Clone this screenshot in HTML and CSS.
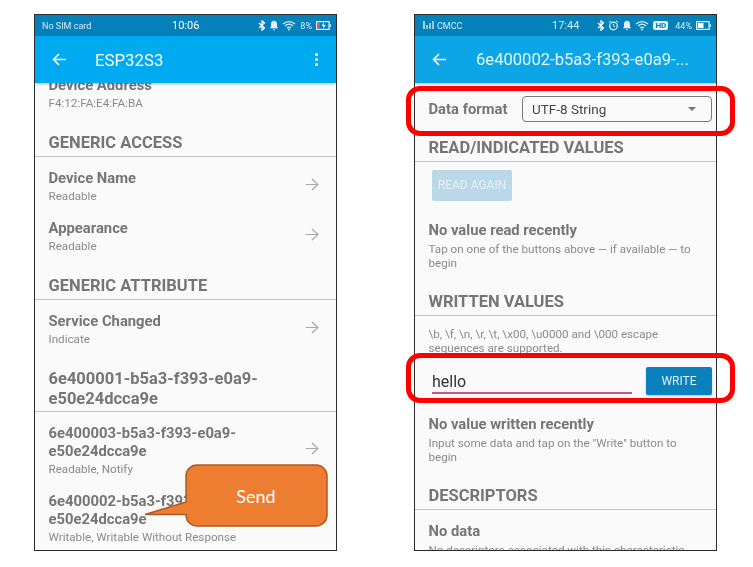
FILE: index.html
```html
<!DOCTYPE html>
<html>
<head>
<meta charset="UTF-8">
<title>ESP32S3</title>
<link rel="stylesheet" href="styles.css">
</head>
<body>
<div class="page">

	<!-- left phone: services list -->
	<div class="phone">
		<div class="status">
			<span class="carrier">No SIM card</span>
			<span class="clock clock-left">10:06</span>
			<span class="status-icons">
				<svg width="8" height="11" viewBox="0 0 8 11"><path d="M1 3l5.500 5-2.500 2.300V.7L6.500 3 1 8" fill="none" stroke="#fff" stroke-width="1.200"/></svg>
				<svg width="10" height="11" viewBox="0 0 10 11"><path d="M5 .8c-2 0-3 1.500-3 3.500v2.500L1 8.200h8L8 6.800V4.300C8 2.300 7 .8 5 .8zM3.900 9h2.200L5 10.400z" fill="#e8f4fa"/></svg>
				<svg width="15" height="11" viewBox="0 0 15 11"><path d="M1 4c3.500-3.300 8.500-3.300 12 0M3 6c2.400-2.200 5.600-2.200 8 0M5 8c1.200-1 2.800-1 4 0" fill="none" stroke="#dcedf6" stroke-width="1.200"/><circle cx="7" cy="9.600" r="1" fill="#dcedf6"/></svg>
				<span class="pct">8%</span>
				<svg width="15" height="9" viewBox="0 0 15 9"><rect x=".6" y=".6" width="12.500" height="7.800" fill="none" stroke="#e8f4fa" stroke-width="1.200"/><rect x="13.500" y="3" width="1.300" height="3" fill="#e8f4fa"/><rect x="2" y="2" width="2" height="5" fill="#e8506a"/><path d="M8 1.500L5.500 5h2L7 7.800 10 4H8z" fill="#fff"/></svg>
			</span>
		</div>
		<div class="appbar">
			<svg class="back" width="15" height="13" viewBox="0 0 15 13"><path d="M14 6.500H1.500M7 1L1.500 6.500 7 12" fill="none" stroke="#fff" stroke-width="1.600"/></svg>
			<span class="appbar-title">ESP32S3</span>
			<span class="dots"><i></i><i></i><i></i></span>
		</div>
		<div class="scroll">
			<div class="address">
				<div class="item-title">Device Address</div>
				<div class="item-sub">F4:12:FA:E4:FA:BA</div>
			</div>

			<h2 class="heading">GENERIC ACCESS</h2>
			<div class="item">
				<div><div class="item-title">Device Name</div><div class="item-sub">Readable</div></div>
				<svg class="go" width="14" height="13" viewBox="0 0 14 13"><path d="M.5 6.500h12.500M7 1l6 5.500L7 12" fill="none" stroke="#a9a9a9" stroke-width="1.200"/></svg>
			</div>
			<div class="item">
				<div><div class="item-title">Appearance</div><div class="item-sub">Readable</div></div>
				<svg class="go" width="14" height="13" viewBox="0 0 14 13"><path d="M.5 6.500h12.500M7 1l6 5.500L7 12" fill="none" stroke="#a9a9a9" stroke-width="1.200"/></svg>
			</div>

			<h2 class="heading heading-next">GENERIC ATTRIBUTE</h2>
			<div class="item">
				<div><div class="item-title">Service Changed</div><div class="item-sub">Indicate</div></div>
				<svg class="go" width="14" height="13" viewBox="0 0 14 13"><path d="M.5 6.500h12.500M7 1l6 5.500L7 12" fill="none" stroke="#a9a9a9" stroke-width="1.200"/></svg>
			</div>

			<h2 class="heading heading-uuid">6e400001-b5a3-f393-e0a9-<br>e50e24dcca9e</h2>
			<div class="item">
				<div><div class="item-title">6e400003-b5a3-f393-e0a9-<br>e50e24dcca9e</div><div class="item-sub">Readable, Notify</div></div>
				<svg class="go" width="14" height="13" viewBox="0 0 14 13"><path d="M.5 6.500h12.500M7 1l6 5.500L7 12" fill="none" stroke="#a9a9a9" stroke-width="1.200"/></svg>
			</div>
			<div class="item">
				<div><div class="item-title">6e400002-b5a3-f393-e0a9-<br>e50e24dcca9e</div><div class="item-sub">Writable, Writable Without Response</div></div>
			</div>
		</div>
	</div>

	<!-- right phone: characteristic detail -->
	<div class="phone">
		<div class="status">
			<span class="carrier">
				<svg width="13" height="9" viewBox="0 0 13 9"><path d="M1 1h2M1 3h2M1 5h2M1 7h2M5 4v4M8 2v6M11 0v8" stroke="#dcedf6" stroke-width="1.300"/></svg>
				CMCC
			</span>
			<span class="clock clock-right">17:44</span>
			<span class="status-icons">
				<svg width="8" height="11" viewBox="0 0 8 11"><path d="M1 3l5.500 5-2.500 2.300V.7L6.500 3 1 8" fill="none" stroke="#fff" stroke-width="1.200"/></svg>
				<svg width="11" height="11" viewBox="0 0 11 11"><circle cx="5.500" cy="6" r="3.800" fill="none" stroke="#e8f4fa" stroke-width="1.200"/><path d="M5.500 3.800V6l1.500 1M.8 2.500L3 .8M10.200 2.500L8 .8" fill="none" stroke="#e8f4fa"/></svg>
				<svg width="10" height="11" viewBox="0 0 10 11"><path d="M5 .8c-2 0-3 1.500-3 3.500v2.500L1 8.200h8L8 6.800V4.300C8 2.300 7 .8 5 .8zM3.900 9h2.200L5 10.400z" fill="#e8f4fa"/></svg>
				<svg width="15" height="11" viewBox="0 0 15 11"><path d="M1 4c3.500-3.300 8.500-3.300 12 0M3 6c2.400-2.200 5.600-2.200 8 0M5 8c1.200-1 2.800-1 4 0" fill="none" stroke="#dcedf6" stroke-width="1.200"/><circle cx="7" cy="9.600" r="1" fill="#dcedf6"/></svg>
				<span class="hd">HD</span>
				<span class="pct pct-wide">44%</span>
				<svg width="15" height="9" viewBox="0 0 15 9"><rect x=".6" y=".6" width="12.500" height="7.800" fill="none" stroke="#e8f4fa" stroke-width="1.200"/><rect x="13.500" y="3" width="1.300" height="3" fill="#e8f4fa"/><rect x="2" y="2" width="5.500" height="5" fill="#fff"/></svg>
			</span>
		</div>
		<div class="appbar appbar-dull">
			<svg class="back" width="15" height="13" viewBox="0 0 15 13"><path d="M14 6.500H1.500M7 1L1.500 6.500 7 12" fill="none" stroke="#fff" stroke-width="1.600"/></svg>
			<span class="appbar-title">6e400002-b5a3-f393-e0a9-...</span>
		</div>
		<div class="scroll">
			<div class="format-row">
				<span class="item-title">Data format</span>
				<div class="select">UTF-8 String<i class="caret"></i></div>
			</div>

			<h2 class="heading heading-read">READ/INDICATED VALUES</h2>
			<div class="btn-read">READ AGAIN</div>
			<div class="note">
				<div class="item-title">No value read recently</div>
				<p class="note-text">Tap on one of the buttons above — if available — to begin</p>
			</div>

			<h2 class="heading">WRITTEN VALUES</h2>
			<p class="escape">\b, \f, \n, \r, \t, \x00, \u0000 and \000 escape sequences are supported.</p>
			<div class="write-row">
				<div class="input">hello</div>
				<div class="btn-write">WRITE</div>
			</div>
			<div class="note">
				<div class="item-title">No value written recently</div>
				<p class="note-text">Input some data and tap on the "Write" button to begin</p>
			</div>

			<h2 class="heading">DESCRIPTORS</h2>
			<div class="note note-last">
				<div class="item-title">No data</div>
				<p class="note-text">No descriptors associated with this characteristic</p>
			</div>
		</div>
	</div>

	<!-- annotations drawn over the screenshots -->
	<div class="mark mark-format"></div>
	<div class="mark mark-write"></div>
	<div class="callout">
		<svg width="194" height="64" viewBox="0 0 194 64"><path d="M52 12a11 11 0 0 1 11-11h119a11 11 0 0 1 11 11v39a11 11 0 0 1-11 11H63a11 11 0 0 1-11-11v-.5H11L52 38z" fill="#ed7d31" stroke="#ae5a21" stroke-width="1.500"/></svg>
		<span class="callout-text">Send</span>
	</div>
</div>
</body>
</html>
```

FILE: styles.css
```css
* {
	box-sizing: border-box;
}
body {
	margin: 0;
	background-color: white;
	font-family: Roboto, "Liberation Sans", sans-serif;
}
.page {
	position: relative;
	display: flex;
	gap: 77px;
	width: 753px;
	height: 567px;
	padding: 14px 0 0 34px;
}
.phone {
	display: flex;
	flex-direction: column;
	width: 303px;
	height: 537px;
	border: 1px solid #2b2b2b;
	background-color: #fafafa;
	overflow: hidden;
}

/* the source pictures are soft photos of a phone screen */
.status,
.appbar,
.scroll {
	filter: blur(0.35px);
}

/* status bar */
.status {
	position: relative;
	display: flex;
	justify-content: space-between;
	align-items: center;
	flex: none;
	height: 21px;
	padding: 0 5px 0 7px;
	background-color: #0480bb;
	color: #d8ebf5;
	font-size: 9px;
}
.carrier {
	display: flex;
	align-items: center;
	gap: 2px;
}
.clock {
	position: absolute;
	top: 3px;
	color: white;
	font-size: 11px;
	line-height: 15px;
}
.clock-left {
	left: 137px;
}
.clock-right {
	left: 137px;
	color: #d8ebf5;
}
.status-icons {
	display: flex;
	align-items: center;
	gap: 3px;
}
.pct {
	margin-right: 1px;
}
.pct-wide {
	margin-left: 4px;
}
.hd {
	padding: 0 2px;
	border-radius: 2px;
	background-color: #eaf4fa;
	color: #0480bb;
	font-size: 8px;
	font-weight: 700;
	line-height: 9px;
}

/* app bar */
.appbar {
	position: relative;
	z-index: 1;
	display: flex;
	align-items: center;
	flex: none;
	height: 47px;
	padding: 0 18px 0 17px;
	background-color: #00aaf0;
	box-shadow: 0 1px 3px rgba(0,0,0,0.25);
	color: white;
}
.appbar-dull {
	background-color: #0ca6e6;
}
.appbar-title {
	margin-left: 28px;
	font-size: 16.800px;
	white-space: nowrap;
}
.appbar-dull .appbar-title {
	margin-left: 29px;
	font-size: 16.600px;
	color: #e4f5fc;
}
.back {
	flex: none;
}
.dots {
	display: flex;
	flex-direction: column;
	gap: 2px;
	margin-left: auto;
}
.dots i {
	width: 3px;
	height: 3px;
	border-radius: 50%;
	background-color: white;
}

/* scrolling content */
.scroll {
	flex: 1;
	min-height: 0;
	overflow: hidden;
	color: #757575;
}
.address {
	margin-top: -7px;
	padding-left: 13.500px;
}
.heading {
	margin: 22.500px 0 0;
	padding: 0 13.500px 3px;
	border-bottom: 1px solid #c4c4c4;
	font-size: 16.500px;
	font-weight: 700;
	line-height: 20px;
}
.heading-next {
	margin-top: 19px;
}
.heading-uuid {
	margin-top: 19px;
	padding-bottom: 2px;
}
.heading-read {
	margin-top: 16px;
}
.item {
	display: flex;
	justify-content: space-between;
	align-items: center;
	padding: 12px 17px 3.500px 13.500px;
}
.go {
	margin-bottom: 3px;
}
.item-title {
	font-size: 14.800px;
	font-weight: 700;
	line-height: 18px;
}
.item-sub {
	margin-top: 0.500px;
	color: #8a8a8a;
	font-size: 11.650px;
	line-height: 16px;
}

/* detail page */
.format-row {
	display: flex;
	justify-content: space-between;
	align-items: center;
	padding: 13px 4px 0 13.500px;
}
.select {
	position: relative;
	flex: none;
	width: 190px;
	height: 26px;
	padding-left: 9px;
	border: 1px solid #7a7a7a;
	border-radius: 4px;
	color: #444;
	font-size: 13.500px;
	line-height: 24px;
}
.caret {
	position: absolute;
	top: 10px;
	right: 15px;
	border-top: 4px solid #757575;
	border-left: 4px solid transparent;
	border-right: 4px solid transparent;
}
.btn-read {
	width: 80px;
	height: 31px;
	margin: 8px 0 0 17px;
	border-radius: 2px;
	background-color: #b9d9e9;
	color: #e6f1f6;
	font-size: 12px;
	line-height: 31px;
	text-align: center;
}
.note {
	margin-top: 20px;
	padding: 0 13.500px;
}
.note-last {
	margin-top: 12px;
}
.note-text {
	margin: 2.500px 0 0;
	color: #8a8a8a;
	font-size: 11.650px;
	line-height: 14px;
}
.escape {
	height: 26px;
	margin: 11px 0 0;
	padding: 0 13.500px;
	overflow: hidden;
	color: #8a8a8a;
	font-size: 11.650px;
	line-height: 14px;
}
.write-row {
	display: flex;
	align-items: flex-end;
	gap: 14px;
	padding: 14px 4px 0 17px;
}
.input {
	width: 200px;
	margin-bottom: 1.500px;
	border-bottom: 2px solid #d0527f;
	color: #333;
	font-size: 16px;
	line-height: 20px;
}
.btn-write {
	width: 66px;
	height: 28px;
	border-radius: 2px;
	background-color: #0a80bc;
	box-shadow: 0 1px 2px rgba(0,0,0,0.25);
	color: #dff0f8;
	font-size: 12px;
	line-height: 28px;
	text-align: center;
}

/* annotations */
.mark {
	position: absolute;
	left: 406px;
	width: 329px;
	height: 50px;
	border: 5px solid #ff0000;
	border-radius: 14px;
}
.mark-format {
	top: 86px;
}
.mark-write {
	top: 353px;
}
.callout {
	position: absolute;
	left: 134px;
	top: 464px;
	width: 194px;
	height: 64px;
}
.callout svg {
	display: block;
	overflow: visible;
}
.callout-text {
	position: absolute;
	left: 52px;
	right: 2px;
	top: 21px;
	color: white;
	font-family: Lato, sans-serif;
	font-size: 18px;
	line-height: 22px;
	text-align: center;
}
```
